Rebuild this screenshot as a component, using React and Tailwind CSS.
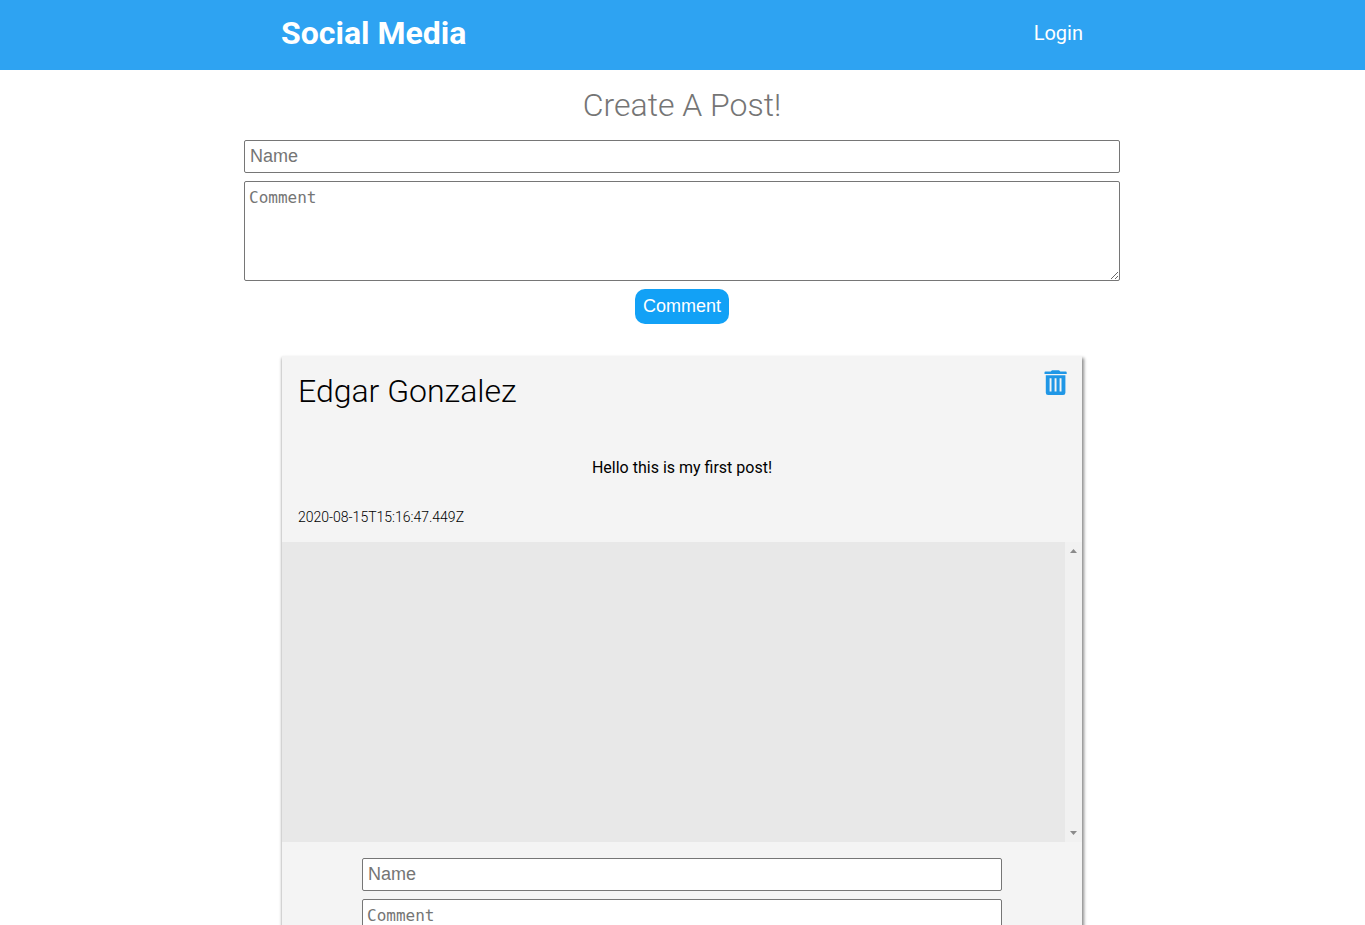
import { useState } from "react";

const TrashIcon = () => (
  <svg className="h-[25px] w-[23px]" viewBox="0 0 23 25" aria-hidden="true">
    <path
      fill="currentColor"
      fillRule="evenodd"
      d="M8 0.3h7l1.3 1.1H21.7a1 1 0 0 1 1 1v1.5H0.5V2.4a1 1 0 0 1 1-1h5.2zM1.8 5.2h19.6v17.5a2.3 2.3 0 0 1-2.3 2.3H4.1a2.3 2.3 0 0 1-2.3-2.3zM5.6 8.2v13.4h1.9V8.2zM10.6 8.2v13.4h1.9V8.2zM15.6 8.2v13.4h1.9V8.2z"
    />
  </svg>
);

function PostForm() {
  return (
    <form className="flex flex-col items-center gap-2" onSubmit={(e) => e.preventDefault()}>
      <input
        type="text"
        aria-label="Name"
        placeholder="Name"
        className="h-[33px] w-full rounded-[2px] border border-[#767676] bg-white px-[5px] font-['Liberation_Sans',Arial,sans-serif] text-lg text-black placeholder:text-[#757575]"
      />
      <textarea
        aria-label="Comment"
        placeholder="Comment"
        className="block h-[100px] w-full resize rounded-[2px] border border-[#767676] bg-white px-1 py-1 font-['DejaVu_Sans_Mono',monospace] text-base text-black placeholder:text-[#757575]"
      />
      <button
        type="submit"
        className="h-[35px] rounded-[10px] bg-[#12a1f6] px-2 pb-0.5 font-['Liberation_Sans',Arial,sans-serif] text-lg text-white"
      >
        Comment
      </button>
    </form>
  );
}

function Comments() {
  return (
    <section aria-label="Comments" className="flex h-[300px] bg-[#e8e8e8]">
      <div className="flex-1" />
      <div className="flex w-[17px] flex-col items-center justify-between bg-[#f1f1f1] py-[7px]" aria-hidden="true">
        <svg width="7" height="4" viewBox="0 0 7 4" fill="#8b8b8b"><path d="M0 4 3.5 0 7 4z" /></svg>
        <svg width="7" height="4" viewBox="0 0 7 4" fill="#8b8b8b"><path d="M0 0 3.5 4 7 0z" /></svg>
      </div>
    </section>
  );
}

function Post({ name, text, date, onDelete }) {
  return (
    <article className="mx-auto w-full max-w-[800px] bg-[#f4f4f4] shadow-[1px_3px_3px_1px_rgba(0,0,0,0.45)]">
      <header className="flex items-start justify-between pt-[14px] pr-[15px] pl-4">
        <h2 className="text-[32px] leading-[42px] font-light text-black">{name}</h2>
        <button type="button" aria-label="Delete post" onClick={onDelete} className="text-[#2097e6]">
          <TrashIcon />
        </button>
      </header>
      <p className="px-4 pt-11 text-center text-base text-black">{text}</p>
      <time className="block px-4 pt-[27px] pb-[15px] text-sm font-light text-black" dateTime={date}>{date}</time>
      <Comments />
      <div className="px-[10%] py-4">
        <PostForm />
      </div>
    </article>
  );
}

export default function App() {
  const [posts, setPosts] = useState([
    { id: 1, name: "Edgar Gonzalez", text: "Hello this is my first post!", date: "2020-08-15T15:16:47.449Z" },
  ]);
  return (
    <div className="h-screen overflow-y-auto bg-white font-['Roboto',sans-serif] [scrollbar-width:none]">
      <header className="bg-[#2ea3f2] pt-[9px] pr-px pb-[13px] text-white">
        <div className="mx-auto flex w-full max-w-[802px] items-center justify-between">
          <h1 className="text-[32px] leading-[48px] font-bold">Social Media</h1>
          <a href="#login" className="text-xl">Login</a>
        </div>
      </header>
      <main className="pr-px">
        <section className="mx-auto w-full max-w-[876px]">
          <h2 className="pt-[14px] pb-[14px] text-center text-[32px] leading-[42px] font-light text-[#757575]">Create A Post!</h2>
          <PostForm />
        </section>
        <div className="flex flex-col gap-8 py-8">
          {posts.map((post) => (
            <Post
              key={post.id}
              name={post.name}
              text={post.text}
              date={post.date}
              onDelete={() => setPosts(posts.filter((p) => p.id !== post.id))}
            />
          ))}
        </div>
      </main>
    </div>
  );
}
